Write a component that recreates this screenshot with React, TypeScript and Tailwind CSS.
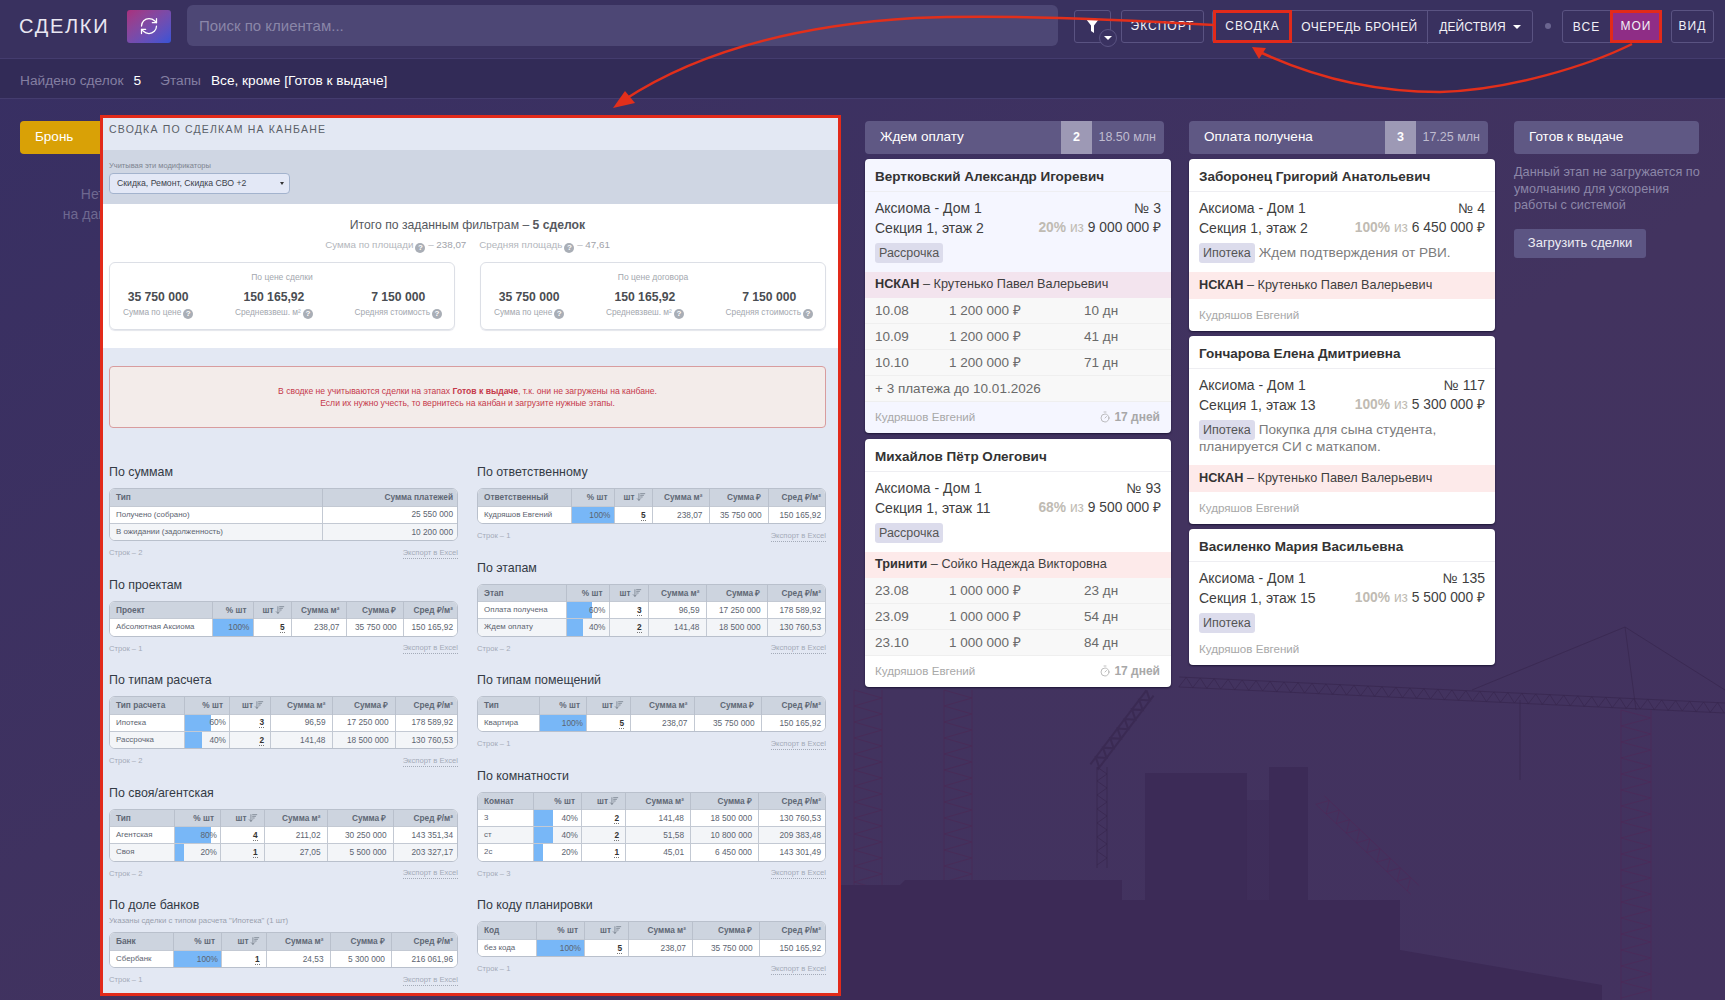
import { ArrowDownWideNarrow, RefreshCw, Timer } from "lucide-react"

type Row = { cells: string[]; pct?: number }
type TableData = {
  title: string
  note?: string
  widths: number[]
  head: string[]
  rows: Row[]
}

const H = ["% шт", "шт", "Сумма м²", "Сумма ₽", "Сред ₽/м²"]

const leftTables: TableData[] = [
  {
    title: "По суммам",
    widths: [212, 137],
    head: ["Тип", "Сумма платежей"],
    rows: [
      { cells: ["Получено (собрано)", "25 550 000"] },
      { cells: ["В ожидании (задолженность)", "10 200 000"] },
    ],
  },
  {
    title: "По проектам",
    widths: [102, 41, 38, 55, 57, 56],
    head: ["Проект", ...H],
    rows: [{ pct: 100, cells: ["Абсолютная Аксиома", "100%", "5", "238,07", "35 750 000", "150 165,92"] }],
  },
  {
    title: "По типам расчета",
    widths: [74, 45.5, 41, 61.5, 63, 64],
    head: ["Тип расчета", ...H],
    rows: [
      { pct: 60, cells: ["Ипотека", "60%", "3", "96,59", "17 250 000", "178 589,92"] },
      { pct: 40, cells: ["Рассрочка", "40%", "2", "141,48", "18 500 000", "130 760,53"] },
    ],
  },
  {
    title: "По своя/агентская",
    widths: [64, 46.5, 43.5, 63, 66, 66],
    head: ["Тип", ...H],
    rows: [
      { pct: 80, cells: ["Агентская", "80%", "4", "211,02", "30 250 000", "143 351,34"] },
      { pct: 20, cells: ["Своя", "20%", "1", "27,05", "5 500 000", "203 327,17"] },
    ],
  },
  {
    title: "По доле банков",
    note: 'Указаны сделки с типом расчета "Ипотека" (1 шт)',
    widths: [63.5, 48, 44.5, 64, 61.5, 67.5],
    head: ["Банк", ...H],
    rows: [{ pct: 100, cells: ["Сбербанк", "100%", "1", "24,53", "5 300 000", "216 061,96"] }],
  },
]

const rightTables: TableData[] = [
  {
    title: "По ответственному",
    widths: [93.5, 42.5, 38, 57, 59, 59],
    head: ["Ответственный", ...H],
    rows: [{ pct: 100, cells: ["Кудряшов Евгений", "100%", "5", "238,07", "35 750 000", "150 165,92"] }],
  },
  {
    title: "По этапам",
    widths: [88, 43, 39, 58, 61, 60],
    head: ["Этап", ...H],
    rows: [
      { pct: 60, cells: ["Оплата получена", "60%", "3", "96,59", "17 250 000", "178 589,92"] },
      { pct: 40, cells: ["Ждем оплату", "40%", "2", "141,48", "18 500 000", "130 760,53"] },
    ],
  },
  {
    title: "По типам помещений",
    widths: [61.5, 47, 44, 63.5, 67, 66],
    head: ["Тип", ...H],
    rows: [{ pct: 100, cells: ["Квартира", "100%", "5", "238,07", "35 750 000", "150 165,92"] }],
  },
  {
    title: "По комнатности",
    widths: [55, 48.5, 44, 65, 68, 68.5],
    head: ["Комнат", ...H],
    rows: [
      { pct: 40, cells: ["3", "40%", "2", "141,48", "18 500 000", "130 760,53"] },
      { pct: 40, cells: ["ст", "40%", "2", "51,58", "10 800 000", "209 383,48"] },
      { pct: 20, cells: ["2с", "20%", "1", "45,01", "6 450 000", "143 301,49"] },
    ],
  },
  {
    title: "По коду планировки",
    widths: [58.5, 48, 44, 64, 66.5, 68],
    head: ["Код", ...H],
    rows: [{ pct: 100, cells: ["без кода", "100%", "5", "238,07", "35 750 000", "150 165,92"] }],
  },
]

function SummaryTable({ data }: { data: TableData }) {
  const hasBars = data.widths.length > 2
  return (
    <div className="mb-[17.5px]">
      <div className="text-[12.4px] leading-4 text-[#333a45]">{data.title}</div>
      {data.note && <div className="mt-[2px] h-[12px] text-[7.8px] leading-3 text-[#9aa1ae]">{data.note}</div>}
      <div className={`${data.note ? "mt-[5px]" : "mt-2"} overflow-hidden rounded-md border border-[#b9c0cc] bg-white`}>
        <table className="w-full table-fixed border-collapse text-[8.3px] text-[#5c6470]">
          <colgroup>
            {data.widths.map((w, i) => (
              <col key={i} style={{ width: w }} />
            ))}
          </colgroup>
          <thead>
            <tr className="h-[17px] bg-[#cdd4df] font-bold text-[#5f6875]">
              {data.head.map((h, i) => (
                <th key={i} className={`border-l border-[#b9c0cc] px-[6px] first:border-l-0 ${i === 0 ? "text-left" : "text-right"}`}>
                  {h}
                  {hasBars && i === 2 && (
                    <ArrowDownWideNarrow className="ml-px inline-block align-[-2px]" size={10} strokeWidth={1.5} />
                  )}
                </th>
              ))}
            </tr>
          </thead>
          <tbody>
            {data.rows.map((row, r) => (
              <tr key={r} className={`h-[17px] border-t border-[#c3c9d3] ${r % 2 ? "bg-[#f3f5f8]" : "bg-white"}`}>
                {row.cells.map((c, i) => (
                  <td
                    key={i}
                    className={`relative border-l border-[#c3c9d3] px-[6px] first:border-l-0 ${
                      i === 0 ? "text-left text-[7.9px]" : "text-right"
                    }`}
                  >
                    {hasBars && i === 1 && (
                      <div className="absolute inset-y-0 left-0 bg-[#78b7f7]" style={{ width: `${row.pct}%` }} />
                    )}
                    <span
                      className={`relative ${hasBars && i === 2 ? "border-b border-dotted border-[#777] font-bold text-[#333]" : ""} ${
                        hasBars && i === 1 ? "-mr-[3px]" : ""
                      }`}
                    >
                      {c}
                    </span>
                  </td>
                ))}
              </tr>
            ))}
          </tbody>
        </table>
      </div>
      <div className="mt-[6px] flex h-3 items-center justify-between text-[7.6px] text-[#a4abb8]">
        <span>Строк – {data.rows.length}</span>
        <span className="border-b border-dotted border-[#a4abb8] leading-[10px]">Экспорт в Excel</span>
      </div>
    </div>
  )
}

function Q() {
  return (
    <span className="ml-[2px] inline-flex h-[10px] w-[10px] items-center justify-center rounded-full bg-[#a9aeb6] align-[-1.5px] text-[8px] font-bold leading-none text-white">
      ?
    </span>
  )
}

function PriceBox({ title }: { title: string }) {
  const stats = [
    ["35 750 000", "Сумма по цене"],
    ["150 165,92", "Средневзвеш. м²"],
    ["7 150 000", "Средняя стоимость"],
  ]
  return (
    <div className="h-[68px] w-[346px] rounded-md border border-[#dcdfe6] pt-[9px] shadow-[0_1px_1px_#e4e6ec]">
      <div className="text-center text-[8.5px] leading-[11px] text-[#a3a7ae]">{title}</div>
      <div className="mt-[7px] flex justify-between pl-[13px] pr-[12px]">
        {stats.map(([v, l]) => (
          <div key={l} className="text-center">
            <div className="text-[12.2px] font-bold leading-[15px] text-[#4a4d52]">{v}</div>
            <div className="mt-[2px] text-[8.3px] leading-[11px] text-[#a3a7ae]">
              {l}
              <Q />
            </div>
          </div>
        ))}
      </div>
    </div>
  )
}

function SummaryPanel() {
  return (
    <div className="absolute left-[100px] top-[115px] z-20 h-[881px] w-[741px] border-[3px] border-[#e22a1a] bg-[#e3e8f3]">
      <div className="h-[32px] pl-[6px] pt-[5px] text-[10.5px] leading-[13px] tracking-[1.2px] text-[#5a6068]">
        СВОДКА ПО СДЕЛКАМ НА КАНБАНЕ
      </div>
      <div className="h-[54px] bg-[#cfd6e3] pl-[6px] pt-[11px]">
        <div className="text-[7.5px] leading-[10px] text-[#7d8490]">Учитывая эти модификаторы</div>
        <div className="mt-[2px] flex h-[21px] w-[181px] items-center justify-between rounded-sm border border-[#a3b3cd] bg-[#e3e8f6] pl-[7px] pr-[5px] text-[8.7px] text-[#3c424c]">
          Скидка, Ремонт, Скидка СВО +2
          <span className="h-0 w-0 border-x-[2.5px] border-t-[3.5px] border-x-transparent border-t-[#333]" />
        </div>
      </div>
      <div className="h-[144px] bg-white pl-[6px] pr-[12px] pt-[13px]">
        <div className="text-center text-[12.2px] leading-4 text-[#55585e]">
          Итого по заданным фильтрам – <b>5 сделок</b>
        </div>
        <div className="mt-[6px] flex justify-center gap-[13px] text-[9.8px] leading-3 text-[#b3b6bc]">
          <span>
            Сумма по площади
            <Q /> – <span className="text-[#9fa3aa]">238,07</span>
          </span>
          <span>
            Средняя площадь
            <Q /> – <span className="text-[#9fa3aa]">47,61</span>
          </span>
        </div>
        <div className="mt-[9px] flex gap-[25px]">
          <PriceBox title="По цене сделки" />
          <PriceBox title="По цене договора" />
        </div>
      </div>
      <div className="pl-[6px] pr-[12px] pt-[18px]">
        <div className="flex h-[62px] flex-col justify-center rounded border border-[#d89c9e] bg-[#f3ecea] text-center text-[8.6px] leading-3 text-[#c5394b]">
          <div>
            В сводке не учитываются сделки на этапах <b>Готов к выдаче</b>, т.к. они не загружены на канбане.
          </div>
          <div>Если их нужно учесть, то вернитесь на канбан и загрузите нужные этапы.</div>
        </div>
        <div className="mt-[36px] flex gap-[19px]">
          <div className="w-[349px]">
            {leftTables.map((t) => (
              <SummaryTable key={t.title} data={t} />
            ))}
          </div>
          <div className="w-[349px]">
            {rightTables.map((t) => (
              <SummaryTable key={t.title} data={t} />
            ))}
          </div>
        </div>
      </div>
    </div>
  )
}

type Deal = {
  name: string
  house: string
  num: string
  section: string
  pct: string
  total: string
  chip: string
  note?: string
  noteTail?: string
  bank?: [string, string]
  bankBg?: string
  payments?: [string, string, string][]
  more?: string
  days?: string
  tint?: boolean
}

const col1: Deal[] = [
  {
    name: "Вертковский Александр Игоревич",
    house: "Аксиома - Дом 1",
    num: "№ 3",
    section: "Секция 1, этаж 2",
    pct: "20%",
    total: "9 000 000 ₽",
    chip: "Рассрочка",
    bank: ["НСКАН", "Крутенько Павел Валерьевич"],
    bankBg: "bg-[#f3e4ee]",
    payments: [
      ["10.08", "1 200 000 ₽", "10 дн"],
      ["10.09", "1 200 000 ₽", "41 дн"],
      ["10.10", "1 200 000 ₽", "71 дн"],
    ],
    more: "+ 3 платежа до 10.01.2026",
    days: "17 дней",
    tint: true,
  },
  {
    name: "Михайлов Пётр Олегович",
    house: "Аксиома - Дом 1",
    num: "№ 93",
    section: "Секция 1, этаж 11",
    pct: "68%",
    total: "9 500 000 ₽",
    chip: "Рассрочка",
    bank: ["Тринити", "Сойко Надежда Викторовна"],
    bankBg: "bg-[#fdeaea]",
    payments: [
      ["23.08", "1 000 000 ₽", "23 дн"],
      ["23.09", "1 000 000 ₽", "54 дн"],
      ["23.10", "1 000 000 ₽", "84 дн"],
    ],
    days: "17 дней",
  },
]

const col2: Deal[] = [
  {
    name: "Заборонец Григорий Анатольевич",
    house: "Аксиома - Дом 1",
    num: "№ 4",
    section: "Секция 1, этаж 2",
    pct: "100%",
    total: "6 450 000 ₽",
    chip: "Ипотека",
    note: "Ждем подтверждения от РВИ.",
    bank: ["НСКАН", "Крутенько Павел Валерьевич"],
    bankBg: "bg-[#fdeaea]",
  },
  {
    name: "Гончарова Елена Дмитриевна",
    house: "Аксиома - Дом 1",
    num: "№ 117",
    section: "Секция 1, этаж 13",
    pct: "100%",
    total: "5 300 000 ₽",
    chip: "Ипотека",
    note: "Покупка для сына студента,",
    noteTail: "планируется СИ с маткапом.",
    bank: ["НСКАН", "Крутенько Павел Валерьевич"],
    bankBg: "bg-[#fdeaea]",
  },
  {
    name: "Василенко Мария Васильевна",
    house: "Аксиома - Дом 1",
    num: "№ 135",
    section: "Секция 1, этаж 15",
    pct: "100%",
    total: "5 500 000 ₽",
    chip: "Ипотека",
  },
]

function DealCard({ deal }: { deal: Deal }) {
  return (
    <div
      className={`overflow-hidden rounded-[4px] text-[14px] text-[#3f3f3f] shadow-[0_1px_2px_#1c1535] ${
        deal.tint ? "bg-[#f5f6ff]" : "bg-white"
      }`}
    >
      <div className="flex h-[33px] items-center border-b border-[#eeeef2] px-[10px] pt-[5px] text-[13.5px] font-bold text-[#333]">
        {deal.name}
      </div>
      <div className={`px-[10px] pt-[6px] ${deal.bank ? "pb-[9px]" : "pb-0"}`}>
        <div className="flex h-[20px] items-center justify-between">
          <span>{deal.house}</span>
          <span>{deal.num}</span>
        </div>
        <div className="flex h-[20px] items-center justify-between">
          <span>{deal.section}</span>
          <span className="text-[13.8px]">
            <b className="text-[#c0bbb3]">{deal.pct}</b> <span className="text-[#c0bbb3]">из</span> {deal.total}
          </span>
        </div>
        <div className="mt-[5px] text-[13.6px] text-[#7c7c7c]">
          <div className="flex h-[20px] items-center gap-[4px]">
            <span className="flex h-[20px] items-center rounded-[3px] bg-[#dcdcec] px-[4px] text-[12.5px] text-[#555]">{deal.chip}</span>
            {deal.note && <span>{deal.note}</span>}
          </div>
          {deal.noteTail && <div className="-mt-[2px] pb-px leading-[17px]">{deal.noteTail}</div>}
        </div>
      </div>
      {deal.bank && (
        <div className={`flex items-center px-[10px] text-[12.7px] ${deal.payments ? "h-[26px]" : "h-[27px]"} ${deal.bankBg}`}>
          <b className="text-[#333]">{deal.bank[0]}</b>&nbsp;– {deal.bank[1]}
        </div>
      )}
      {deal.payments?.map((p) => (
        <div key={p[0]} className="flex h-[26px] items-center border-b border-[#efefef] bg-[#f8f8f8] px-[10px] pt-[2px] text-[13.5px] text-[#6a6a6a]">
          <span className="w-[74px]">{p[0]}</span>
          <span className="w-[135px]">{p[1]}</span>
          <span>{p[2]}</span>
        </div>
      ))}
      {deal.more && (
        <div className="flex h-[26px] items-center border-b border-[#efefef] bg-[#f8f8f8] px-[10px] pt-[2px] text-[13.5px] text-[#6a6a6a]">
          {deal.more}
        </div>
      )}
      <div
        className={`flex items-center justify-between pl-[10px] pr-[11px] text-[11.6px] text-[#a8a8a8] ${
          deal.payments ? "h-[31px] pb-[2px]" : "h-[32px]"
        }`}
      >
        <span>Кудряшов Евгений</span>
        {deal.days && (
          <span className="flex items-center gap-[3px] text-[12px] font-bold">
            <Timer size={12} strokeWidth={1.5} />
            {deal.days}
          </span>
        )}
      </div>
    </div>
  )
}

function ColumnHead({ title, count, sum, color }: { title: string; count?: string; sum?: string; color?: string }) {
  return (
    <div className={`flex h-[33px] items-center overflow-hidden rounded-[4px] pl-[15px] text-[13.5px] text-white ${color ?? "bg-[#5f5884]"}`}>
      <span className="flex-1">{title}</span>
      {count && (
        <>
          <span className="flex h-full w-[31px] items-center justify-center bg-[#9d99b5] text-[12.5px] font-bold">{count}</span>
          <span className="w-[72px] pr-[8px] text-right text-[12.5px] text-[#bfbcd0]">{sum}</span>
        </>
      )}
    </div>
  )
}

function lattice(x1: number, y1: number, x2: number, y2: number, w: number, step: number) {
  const len = Math.hypot(x2 - x1, y2 - y1)
  const ux = (x2 - x1) / len
  const uy = (y2 - y1) / len
  const nx = (-uy * w) / 2
  const ny = (ux * w) / 2
  let d = `M${x1 + nx} ${y1 + ny}L${x2 + nx} ${y2 + ny}M${x1 - nx} ${y1 - ny}L${x2 - nx} ${y2 - ny}M${x1 + nx} ${y1 + ny}`
  const n = Math.floor(len / step)
  for (let i = 1; i <= n; i++) {
    const s = i % 2 ? -1 : 1
    d += `L${x1 + ux * step * i + nx * s} ${y1 + uy * step * i + ny * s}`
  }
  return d
}

function Backdrop() {
  return (
    <svg className="absolute inset-0 h-[1000px] w-[1725px]" viewBox="0 0 1725 1000" fill="none">
      <defs>
        <linearGradient id="sky" x1="0" y1="0" x2="1" y2="1">
          <stop offset="0" stopColor="#372f63" />
          <stop offset="0.6" stopColor="#42335f" />
          <stop offset="1" stopColor="#43325f" />
        </linearGradient>
      </defs>
      <rect width="1725" height="1000" fill="url(#sky)" />
      <g stroke="#38274f" strokeOpacity="0.7" strokeWidth="1">
        <path d={lattice(1179, 682, 1725, 708, 10, 7)} />
        <path d={lattice(1636, 710, 1636, 1000, 30, 8)} stroke="#4d2a58" />
        <path d={lattice(868, 690, 868, 890, 28, 8)} stroke="#4a2a56" />
        <path d={lattice(958, 690, 958, 890, 28, 8)} stroke="#4a2a56" />
        <path d={lattice(1150, 693, 1094, 767, 9, 6)} strokeWidth="2" />
        <path d={lattice(1102, 767, 1102, 868, 10, 7)} />
        <path d={lattice(1320, 800, 1415, 890, 12, 7)} stroke="#4d2a58" />
        <path d="M1625 627L1472 690M1625 627L1725 690M1625 627L1636 710" />
        <path d="M1520 700V780" />
      </g>
      <g fill="#3c2a56">
        <rect x="1145" y="773" width="102" height="227" fillOpacity="0.9" />
        <rect x="1269" y="767" width="39" height="233" fillOpacity="0.9" />
        <rect x="1246" y="800" width="24" height="200" fillOpacity="0.55" />
        <path d="M840 885H900L905 880H1122V1000H840Z" />
        <path d="M1122 900H1400V950L1602 985V1000H1122Z" />
      </g>
    </svg>
  )
}

export default function App() {
  return (
    <div className="relative h-[1000px] w-[1725px] overflow-hidden font-['Liberation_Sans',Arial,sans-serif] text-white">
      <Backdrop />

      <div className="relative flex h-[59px] items-center border-b border-[#443c6e] bg-[#39315f]/95 pb-[6px] pl-[19px] pr-[11px]">
        <div className="w-[108px] text-[20px] font-light tracking-[1.7px] text-[#e9e7f2]">СДЕЛКИ</div>
        <button className="flex h-[33px] w-[44px] items-center justify-center rounded-[3px] bg-gradient-to-br from-[#a92f7d] to-[#3652d6]">
          <RefreshCw size={20} strokeWidth={1.5} />
        </button>
        <input
          className="-mt-[2px] ml-[16px] h-[41px] min-w-0 flex-1 rounded-md bg-[#4d4775] px-[12px] text-[15px] outline-none placeholder:text-[#8a86a8]"
          placeholder="Поиск по клиентам..."
        />
        <div className="relative ml-[16px] flex h-[33px] w-[37px] items-center justify-center rounded-[3px] border border-[#5a5382]">
          <svg width="13" height="14" viewBox="0 0 13 14" fill="#fff">
            <path d="M0 0H13L8 6.5V14L5 12V6.5Z" />
          </svg>
          <span className="absolute -bottom-[5px] -right-[7px] flex h-[18px] w-[18px] items-center justify-center rounded-full border border-[#5a5382] bg-[#3a3261]">
            <span className="h-0 w-0 border-x-[4px] border-t-[4px] border-x-transparent border-t-white" />
          </span>
        </div>
        <HeadButton className="ml-[10px] w-[83px] rounded-[3px] border border-[#5a5382] tracking-[1px]">ЭКСПОРТ</HeadButton>
        <div className="ml-[8px] flex h-[33px] rounded-[3px] border border-[#5a5382]">
          <HeadButton className="relative z-10 -my-px w-[79px] tracking-[1px] ring-[3px] ring-inset ring-[#e22a1a]">СВОДКА</HeadButton>
          <HeadButton className="w-[136px] border-r border-[#5a5382] tracking-[0.4px]">ОЧЕРЕДЬ БРОНЕЙ</HeadButton>
          <HeadButton className="w-[104px] tracking-[0.1px]">
            ДЕЙСТВИЯ
            <span className="ml-[7px] inline-block h-0 w-0 border-x-[4px] border-t-[4px] border-x-transparent border-t-white align-[2px]" />
          </HeadButton>
        </div>
        <div className="flex w-[29px] justify-center">
          <span className="h-[6px] w-[6px] rounded-full bg-[#6b6590]" />
        </div>
        <div className="flex h-[33px] rounded-[3px] border border-[#5a5382]">
          <HeadButton className="w-[47px] tracking-[1px]">ВСЕ</HeadButton>
          <HeadButton className="relative z-10 -my-px -mr-px w-[52px] bg-[#8f2d86] tracking-[1px] ring-[3px] ring-inset ring-[#e22a1a]">МОИ</HeadButton>
        </div>
        <HeadButton className="ml-[9px] w-[43px] rounded-[3px] border border-[#5a5382] tracking-[1px]">ВИД</HeadButton>
      </div>

      <div className="relative flex h-[40px] items-center border-b border-[#443c6e] bg-[#312b56]/95 pl-[20px] pt-[5px] text-[13.7px]">
        <span className="text-[#847fa2]">Найдено сделок</span>
        <span className="ml-[10px]">5</span>
        <span className="ml-[19px] text-[#847fa2]">Этапы</span>
        <span className="ml-[10px]">Все, кроме [Готов к выдаче]</span>
      </div>

      <div className="relative flex items-start pl-[20px] pt-[22px]">
        <div className="mr-[24px] w-[821px]">
          <div className="w-[298px]">
            <ColumnHead title="Бронь" color="bg-[#d9a106]" />
          </div>
          <div className="mt-[31px] w-[194px] text-center text-[14px] leading-[19.5px] text-[#6e6890]">
            Нет сделок
            <br />
            на данном этапе
          </div>
        </div>
        <div className="mr-[18px] w-[306px]">
          <div className="w-[299px]">
            <ColumnHead title="Ждем оплату" count="2" sum="18.50 млн" />
          </div>
          <div className="mt-[5px] flex flex-col gap-[6px]">
            {col1.map((d) => (
              <DealCard key={d.name} deal={d} />
            ))}
          </div>
        </div>
        <div className="mr-[19px] w-[306px]">
          <div className="w-[299px]">
            <ColumnHead title="Оплата получена" count="3" sum="17.25 млн" />
          </div>
          <div className="mt-[5px] flex flex-col gap-[5px]">
            {col2.map((d) => (
              <DealCard key={d.name} deal={d} />
            ))}
          </div>
        </div>
        <div className="w-[185px]">
          <ColumnHead title="Готов к выдаче" />
          <div className="mt-[10px] w-[190px] text-[12.7px] leading-[16.5px] text-[#8c87a8]">
            Данный этап не загружается по умолчанию для ускорения работы с системой
          </div>
          <button className="mt-[15px] flex h-[29px] w-[132px] items-center justify-center rounded-[3px] bg-[#5c5583] text-[13px] text-[#eeedf4]">
            Загрузить сделки
          </button>
        </div>
      </div>

      <SummaryPanel />

      <svg className="pointer-events-none absolute inset-0 z-30 h-[1000px] w-[1725px]" viewBox="0 0 1725 1000" fill="none">
        <path d="M1214 25C1130 20 1000 14 915 18C800 25 700 50 624 100" stroke="#e22f1b" strokeWidth="2.5" />
        <path d="M613 108L625 91L635 103Z" fill="#e22f1b" />
        <path d="M1632 44C1590 65 1510 90 1440 92C1370 92 1310 75 1262 53" stroke="#e22f1b" strokeWidth="2.5" />
        <path d="M1252 47L1266 48L1259 59Z" fill="#e22f1b" />
      </svg>
    </div>
  )
}

function HeadButton({ className, children }: { className: string; children: React.ReactNode }) {
  return (
    <button className={`flex h-[33px] items-center justify-center text-[12px] text-[#f1f0f6] ${className}`}>
      {children}
    </button>
  )
}
